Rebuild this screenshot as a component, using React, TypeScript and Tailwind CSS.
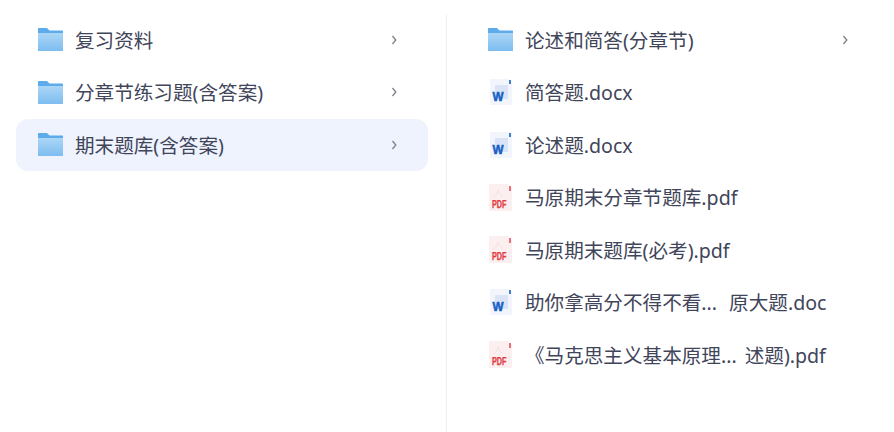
import React from "react";

function Folder() {
  return (
    <svg width="25" height="23" viewBox="0 0 25 23" className="shrink-0">
      <defs>
        <linearGradient id="fg" x1="0" y1="0" x2="0" y2="1">
          <stop offset="0" stopColor="#acd6f6" />
          <stop offset="1" stopColor="#7dbdf0" />
        </linearGradient>
      </defs>
      <path d="M0 1C0 .4.4 0 1 0h8l2.500 2.500H24c.6 0 1 .4 1 1V22c0 .6-.4 1-1 1H1c-.6 0-1-.4-1-1z" fill="#5dabea" />
      <path d="M0 5h25v17c0 .6-.4 1-1 1H1c-.6 0-1-.4-1-1z" fill="url(#fg)" />
    </svg>
  );
}

function Word() {
  return (
    <svg width="25" height="26" viewBox="0 0 25 26" className="shrink-0">
      <path d="M3 0h18l3 3v22c0 .6-.4 1-1 1H3c-.6 0-1-.4-1-1V1c0-.6.4-1 1-1z" fill="#f2f5fc" />
      <rect x="21" y="1" width="2" height="4" fill="#3f7fd1" />
      <rect x="7" y="6" width="13" height="14" fill="#dbe3f6" />
      <text x="4.500" y="21.500" fontSize="12" fontWeight="700" fill="#1560c4" fontFamily="Liberation Sans" textLength="11" lengthAdjust="spacingAndGlyphs" stroke="#1560c4" strokeWidth="0.5">W</text>
    </svg>
  );
}

function Pdf() {
  return (
    <svg width="25" height="27" viewBox="0 0 25 27" className="shrink-0">
      <path d="M2 0h18l4 4v22c0 .6-.4 1-1 1H2c-.6 0-1-.4-1-1V1c0-.6.4-1 1-1z" fill="#fbeff0" />
      <rect x="21" y="2" width="2" height="5" fill="#e8727a" />
      <path d="M5 13c3-1.500 4.500-4 5-7 .8 3 2.500 5.500 5 6.500" fill="none" stroke="#f6e0e2" strokeWidth="1" />
      <text x="4" y="23.500" fontSize="10" fontWeight="700" fill="#e23a42" fontFamily="Liberation Sans" textLength="14.500" lengthAdjust="spacingAndGlyphs" stroke="#e23a42" strokeWidth="0.25">PDF</text>
    </svg>
  );
}

function Chevron() {
  return (
    <svg width="6" height="12" viewBox="0 0 6 12" className="shrink-0">
      <path d="M1.500 2L4.800 6 1.500 10" fill="none" stroke="#7c808c" strokeWidth="1.300" />
    </svg>
  );
}

function Row({ icon, label, arrow, active, tail, gap, w }: { icon: React.ReactNode; label: string; arrow?: boolean; active?: boolean; tail?: string; gap?: string; w: string }) {
  return (
    <div className={`flex h-[51.5px] mb-[1px] items-center rounded-xl ${w} ${active ? "bg-[#eff3fe]" : ""}`}>
      {icon}
      <span className="ml-[12px] mt-[2px] text-[19.6px] leading-none text-[#41455a] whitespace-pre">
        {label}
        {tail ? <span className={gap}>{tail}</span> : null}
      </span>
      {arrow ? <span className="ml-auto flex"><Chevron /></span> : null}
    </div>
  );
}

export default function App() {
  const lw = "pl-[22px] pr-[31px]";
  const rw = "pr-[46px]";
  return (
    <div className="flex h-[432px] w-[894px] overflow-hidden bg-white font-['Noto_Sans','Noto_Sans_CJK_SC',sans-serif]">
      <div className="w-[446px] shrink-0 pl-4 pr-[18px] pt-[14px]">
        <Row w={lw} icon={<Folder />} label="复习资料" arrow />
        <Row w={lw} icon={<Folder />} label="分章节练习题(含答案)" arrow />
        <Row w={lw} icon={<Folder />} label="期末题库(含答案)" arrow active />
      </div>
      <div className="mt-[15px] flex-1 border-l border-[#eceef1] pl-[41px]">
        <div className="-mt-[1px]">
          <Row w={rw} icon={<Folder />} label="论述和简答(分章节)" arrow />
          <Row w={rw} icon={<Word />} label="简答题.docx" />
          <Row w={rw} icon={<Word />} label="论述题.docx" />
          <Row w={rw} icon={<Pdf />} label="马原期末分章节题库.pdf" />
          <Row w={rw} icon={<Pdf />} label="马原期末题库(必考).pdf" />
          <Row w={rw} icon={<Word />} label="助你拿高分不得不看..." tail="原大题.doc" gap="ml-[12px]" />
          <Row w={rw} icon={<Pdf />} label="《马克思主义基本原理..." tail="述题).pdf" gap="ml-[8px]" />
        </div>
      </div>
    </div>
  );
}
